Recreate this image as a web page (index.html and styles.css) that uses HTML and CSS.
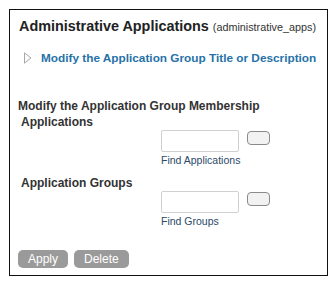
FILE: index.html
```html
<!DOCTYPE html>
<html lang="en">
<head>
  <meta charset="UTF-8">
  <title>Administrative Applications</title>
  <link rel="stylesheet" href="styles.css">
</head>
<body>
  <div class="panel">
    <h2 class="title">Administrative Applications <span class="code">(administrative_apps)</span></h2>

    <a class="toggle" href="#">
      <svg class="arrow" width="8" height="12" viewBox="0 0 8 12"><path d="M0.5 0.8 L7 6 L0.5 11.2 Z" fill="#fafafa" stroke="#a8a8a8" stroke-width="1"/></svg>
      Modify the Application Group Title or Description
    </a>

    <h3 class="section">Modify the Application Group Membership</h3>

    <div class="member">
      <div class="member-label">Applications</div>
      <div class="finder">
        <div class="finder-row">
          <input type="text" class="finder-input">
          <button class="finder-btn"></button>
        </div>
        <div class="finder-hint">Find Applications</div>
      </div>
    </div>

    <div class="member">
      <div class="member-label">Application Groups</div>
      <div class="finder">
        <div class="finder-row">
          <input type="text" class="finder-input">
          <button class="finder-btn"></button>
        </div>
        <div class="finder-hint">Find Groups</div>
      </div>
    </div>

    <div class="actions">
      <button class="action">Apply</button>
      <button class="action">Delete</button>
    </div>
  </div>
</body>
</html>
```

FILE: styles.css
```css
body {
  margin: 0;
  padding: 9px;
  font-family: 'Liberation Sans', Arial, sans-serif;
  background-color: #ffffff;
  color: #333;
}

.panel {
  width: 319px;
  height: 267px;
  border: 1px solid #111;
  padding: 0 8px;
  box-sizing: border-box;
}

.title {
  margin: 7px 0 0 1px;
  font-size: 14.4px;
  line-height: 18px;
  font-weight: bold;
  color: #222;
  white-space: nowrap;
}

.code {
  font-size: 10.8px;
  font-weight: normal;
  color: #333;
}

.toggle {
  display: flex;
  align-items: center;
  gap: 9px;
  margin: 14px 0 0 6px;
  font-size: 11.8px;
  font-weight: bold;
  color: #2672a8;
  text-decoration: none;
  line-height: 16px;
  white-space: nowrap;
}

.arrow {
  flex-shrink: 0;
}

.section {
  margin: 32px 0 0 0;
  font-size: 12px;
  font-weight: bold;
  line-height: 16px;
  color: #333;
}

.member {
  margin-left: 3px;
}

.member-label {
  font-size: 12px;
  font-weight: bold;
  line-height: 16px;
  color: #333;
}

.finder {
  margin-left: 140px;
}

.finder-row {
  display: flex;
  align-items: flex-start;
  gap: 8px;
}

.finder-input {
  width: 78px;
  height: 22px;
  box-sizing: border-box;
  border: 1px solid #d0d0d0;
  border-radius: 2px;
  padding: 0;
  margin: 0;
}

.finder-btn {
  width: 23px;
  height: 14px;
  margin-top: 1px;
  border: 1px solid #8a8a8a;
  border-radius: 4px;
  background-color: #f2f2f2;
  padding: 0;
}

.finder-hint {
  margin-top: 2px;
  font-size: 10.5px;
  line-height: 12px;
  color: #2a4a68;
}

.member + .member {
  margin-top: 9px;
}

.actions {
  display: flex;
  gap: 6px;
  margin-top: 23px;
}

.action {
  height: 18px;
  padding: 0 10px;
  border: none;
  border-radius: 5px;
  background-color: #9a9a9a;
  color: #ffffff;
  font-family: 'Liberation Sans', Arial, sans-serif;
  font-size: 12px;
  line-height: 18px;
}
```
